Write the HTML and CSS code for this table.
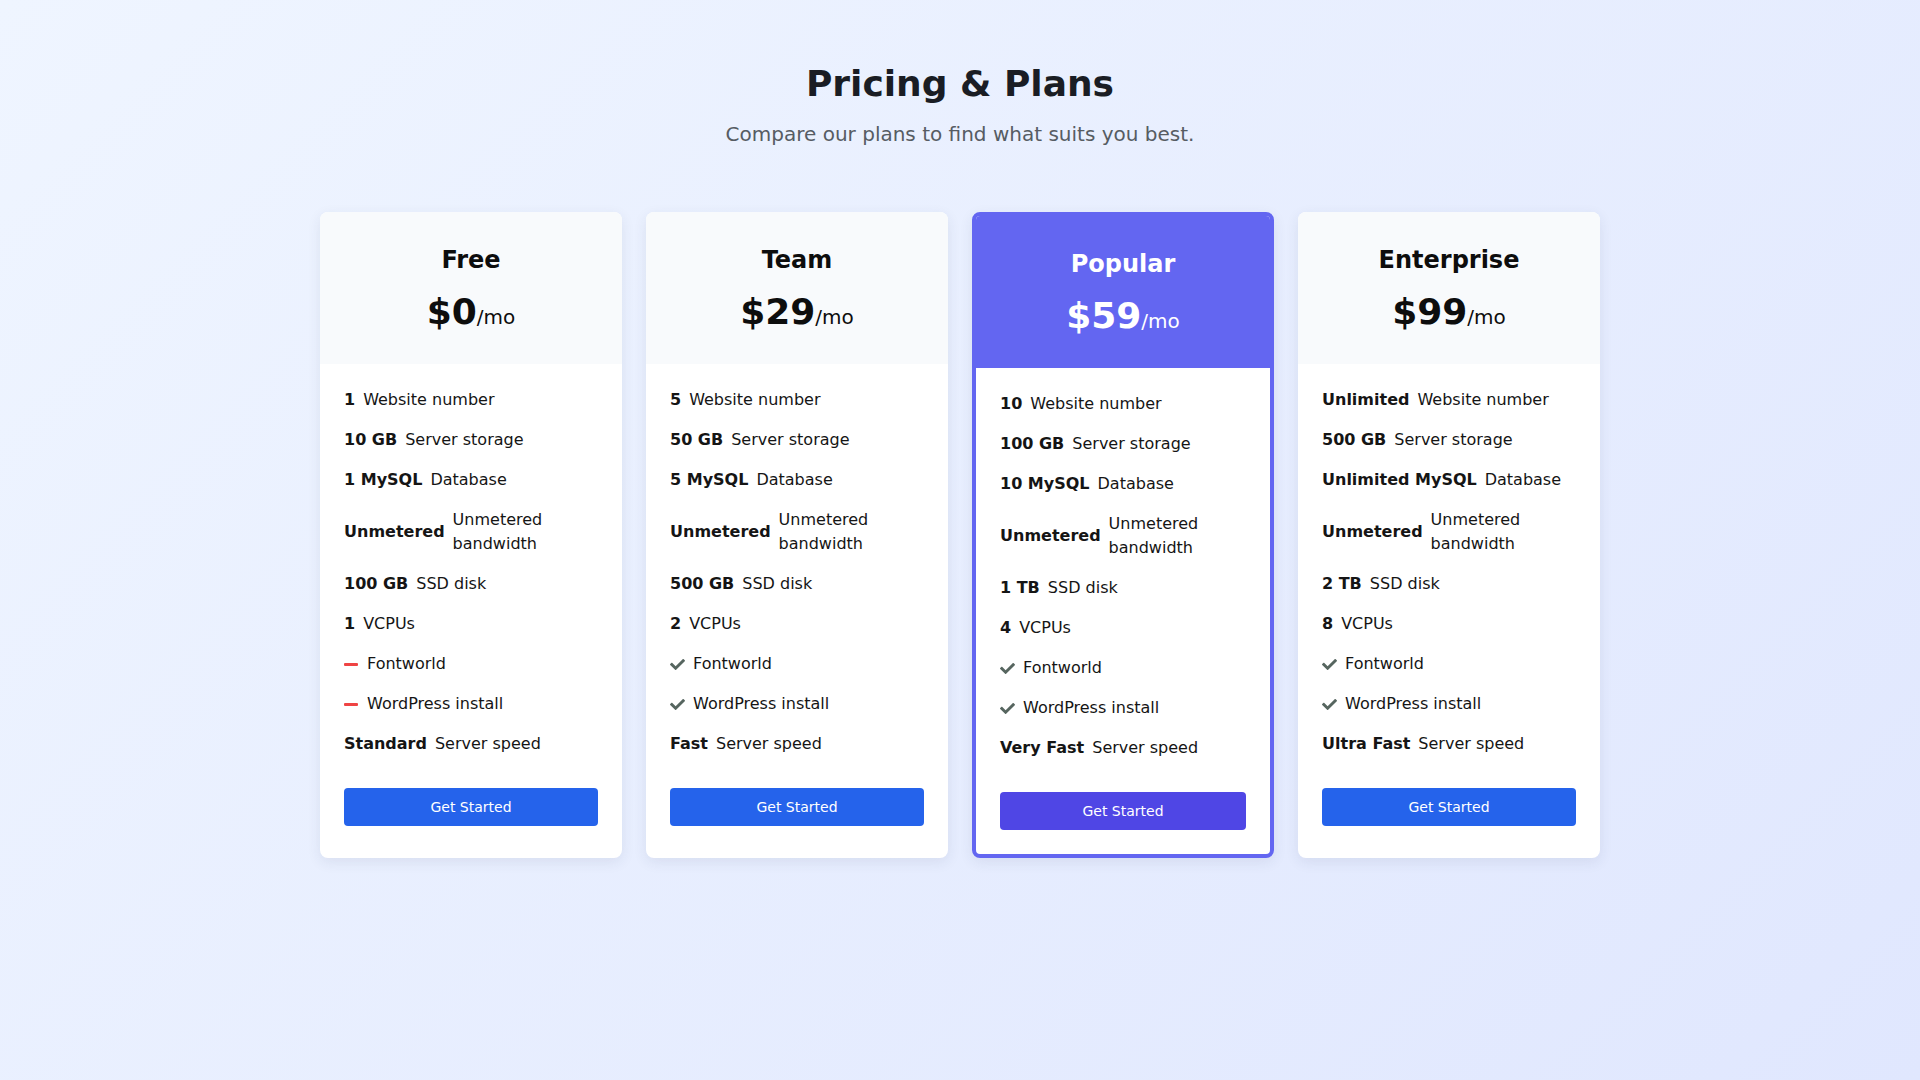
FILE: index.html
```html
<!DOCTYPE html>
<html lang="en">
<head>
<meta charset="utf-8">
<title>Pricing &amp; Plans</title>
<link rel="stylesheet" href="styles.css">
</head>
<body>
<main class="page">
  <header class="intro">
    <h1 class="intro-title">Pricing &amp; Plans</h1>
    <p class="intro-sub">Compare our plans to find what suits you best.</p>
  </header>
  <section class="plans">
    <article class="plan">
      <div class="plan-head">
        <h2 class="plan-name">Free</h2>
        <div class="plan-price">$0<span class="plan-per">/mo</span></div>
      </div>
      <div class="plan-body">
        <ul class="features">
          <li class="feature"><b>1</b><span>Website number</span></li>
          <li class="feature"><b>10 GB</b><span>Server storage</span></li>
          <li class="feature"><b>1 MySQL</b><span>Database</span></li>
          <li class="feature"><b>Unmetered</b><span>Unmetered bandwidth</span></li>
          <li class="feature"><b>100 GB</b><span>SSD disk</span></li>
          <li class="feature"><b>1</b><span>VCPUs</span></li>
          <li class="feature"><i class="dash"></i><span>Fontworld</span></li>
          <li class="feature"><i class="dash"></i><span>WordPress install</span></li>
          <li class="feature"><b>Standard</b><span>Server speed</span></li>
        </ul>
        <button class="btn" type="button">Get Started</button>
      </div>
    </article>
    <article class="plan">
      <div class="plan-head">
        <h2 class="plan-name">Team</h2>
        <div class="plan-price">$29<span class="plan-per">/mo</span></div>
      </div>
      <div class="plan-body">
        <ul class="features">
          <li class="feature"><b>5</b><span>Website number</span></li>
          <li class="feature"><b>50 GB</b><span>Server storage</span></li>
          <li class="feature"><b>5 MySQL</b><span>Database</span></li>
          <li class="feature"><b>Unmetered</b><span>Unmetered bandwidth</span></li>
          <li class="feature"><b>500 GB</b><span>SSD disk</span></li>
          <li class="feature"><b>2</b><span>VCPUs</span></li>
          <li class="feature"><svg class="check" viewBox="0 0 512 512"><path d="M173.9 439.4l-166.4-166.4c-10-10-10-26.2 0-36.2l36.2-36.2c10-10 26.2-10 36.2 0L192 312.7 432.1 72.6c10-10 26.2-10 36.2 0l36.2 36.2c10 10 10 26.2 0 36.2l-294.4 294.4c-10 10-26.2 10-36.2 0z"/></svg><span>Fontworld</span></li>
          <li class="feature"><svg class="check" viewBox="0 0 512 512"><path d="M173.9 439.4l-166.4-166.4c-10-10-10-26.2 0-36.2l36.2-36.2c10-10 26.2-10 36.2 0L192 312.7 432.1 72.6c10-10 26.2-10 36.2 0l36.2 36.2c10 10 10 26.2 0 36.2l-294.4 294.4c-10 10-26.2 10-36.2 0z"/></svg><span>WordPress install</span></li>
          <li class="feature"><b>Fast</b><span>Server speed</span></li>
        </ul>
        <button class="btn" type="button">Get Started</button>
      </div>
    </article>
    <article class="plan plan-popular">
      <div class="plan-head">
        <h2 class="plan-name">Popular</h2>
        <div class="plan-price">$59<span class="plan-per">/mo</span></div>
      </div>
      <div class="plan-body">
        <ul class="features">
          <li class="feature"><b>10</b><span>Website number</span></li>
          <li class="feature"><b>100 GB</b><span>Server storage</span></li>
          <li class="feature"><b>10 MySQL</b><span>Database</span></li>
          <li class="feature"><b>Unmetered</b><span>Unmetered bandwidth</span></li>
          <li class="feature"><b>1 TB</b><span>SSD disk</span></li>
          <li class="feature"><b>4</b><span>VCPUs</span></li>
          <li class="feature"><svg class="check" viewBox="0 0 512 512"><path d="M173.9 439.4l-166.4-166.4c-10-10-10-26.2 0-36.2l36.2-36.2c10-10 26.2-10 36.2 0L192 312.7 432.1 72.6c10-10 26.2-10 36.2 0l36.2 36.2c10 10 10 26.2 0 36.2l-294.4 294.4c-10 10-26.2 10-36.2 0z"/></svg><span>Fontworld</span></li>
          <li class="feature"><svg class="check" viewBox="0 0 512 512"><path d="M173.9 439.4l-166.4-166.4c-10-10-10-26.2 0-36.2l36.2-36.2c10-10 26.2-10 36.2 0L192 312.7 432.1 72.6c10-10 26.2-10 36.2 0l36.2 36.2c10 10 10 26.2 0 36.2l-294.4 294.4c-10 10-26.2 10-36.2 0z"/></svg><span>WordPress install</span></li>
          <li class="feature"><b>Very Fast</b><span>Server speed</span></li>
        </ul>
        <button class="btn btn-popular" type="button">Get Started</button>
      </div>
    </article>
    <article class="plan">
      <div class="plan-head">
        <h2 class="plan-name">Enterprise</h2>
        <div class="plan-price">$99<span class="plan-per">/mo</span></div>
      </div>
      <div class="plan-body">
        <ul class="features">
          <li class="feature"><b>Unlimited</b><span>Website number</span></li>
          <li class="feature"><b>500 GB</b><span>Server storage</span></li>
          <li class="feature"><b>Unlimited MySQL</b><span>Database</span></li>
          <li class="feature"><b>Unmetered</b><span>Unmetered bandwidth</span></li>
          <li class="feature"><b>2 TB</b><span>SSD disk</span></li>
          <li class="feature"><b>8</b><span>VCPUs</span></li>
          <li class="feature"><svg class="check" viewBox="0 0 512 512"><path d="M173.9 439.4l-166.4-166.4c-10-10-10-26.2 0-36.2l36.2-36.2c10-10 26.2-10 36.2 0L192 312.7 432.1 72.6c10-10 26.2-10 36.2 0l36.2 36.2c10 10 10 26.2 0 36.2l-294.4 294.4c-10 10-26.2 10-36.2 0z"/></svg><span>Fontworld</span></li>
          <li class="feature"><svg class="check" viewBox="0 0 512 512"><path d="M173.9 439.4l-166.4-166.4c-10-10-10-26.2 0-36.2l36.2-36.2c10-10 26.2-10 36.2 0L192 312.7 432.1 72.6c10-10 26.2-10 36.2 0l36.2 36.2c10 10 10 26.2 0 36.2l-294.4 294.4c-10 10-26.2 10-36.2 0z"/></svg><span>WordPress install</span></li>
          <li class="feature"><b>Ultra Fast</b><span>Server speed</span></li>
        </ul>
        <button class="btn" type="button">Get Started</button>
      </div>
    </article>
  </section>
</main>
</body>
</html>
```
FILE: styles.css
```css
* { box-sizing: border-box; }
html, body { margin: 0; padding: 0; }
body {
  min-height: 1080px;
  font-family: "DejaVu Sans", Verdana, sans-serif;
  color: #111;
  background: linear-gradient(135deg, #eff5ff 0%, #e0e7fe 100%);
}
.page {
  padding-top: 62px;
}
.intro { text-align: center; }
.intro-title {
  margin: 0 0 14px;
  font-size: 36px;
  line-height: 43px;
  font-weight: 700;
  color: #1a1d24;
}
.intro-sub {
  margin: 0 0 63px;
  font-size: 20px;
  line-height: 30px;
  color: #565c63;
}
.plans {
  width: 1280px;
  margin: 0 auto;
  display: grid;
  grid-template-columns: repeat(4, 1fr);
  gap: 24px;
}
.plan {
  background: #fff;
  border-radius: 8px;
  overflow: hidden;
  box-shadow: 0 4px 14px rgba(40, 50, 90, 0.09);
}
.plan-head {
  background: #f8fafc;
  text-align: center;
  padding: 34px 24px 25px;
}
.plan-name {
  margin: 0 0 15px;
  font-size: 24px;
  line-height: 29px;
  font-weight: 700;
  color: #0d0d0d;
}
.plan-price {
  font-size: 36px;
  line-height: 43px;
  font-weight: 700;
  color: #0d0d0d;
}
.plan-per {
  font-size: 20px;
  font-weight: 400;
}
.plan-body {
  padding: 24px 24px 24px;
}
.features {
  list-style: none;
  margin: 0 0 32px;
  padding: 0;
  display: flex;
  flex-direction: column;
  gap: 16px;
}
.feature {
  display: flex;
  align-items: center;
  gap: 8px;
  font-size: 16px;
  line-height: 24px;
  color: #151515;
}
.feature b {
  font-weight: 700;
  flex: none;
}
.dash {
  flex: none;
  display: block;
  width: 14px;
  height: 3px;
  margin-right: 1px;
  background: #ef4444;
  border-radius: 1px;
}
.check {
  flex: none;
  width: 15px;
  height: 15px;
  fill: #56655f;
}
.btn {
  display: block;
  width: 100%;
  height: 38px;
  border: 0;
  border-radius: 4px;
  background: #2563eb;
  color: #fff;
  font-family: "DejaVu Sans", Verdana, sans-serif;
  font-size: 14px;
  cursor: pointer;
}
.plan-popular {
  border: 4px solid #6366f1;
}
.plan-popular .plan-head {
  background: #6366f1;
}
.plan-popular .plan-name,
.plan-popular .plan-price {
  color: #fff;
}
.btn-popular {
  background: #4f46e5;
}
```
